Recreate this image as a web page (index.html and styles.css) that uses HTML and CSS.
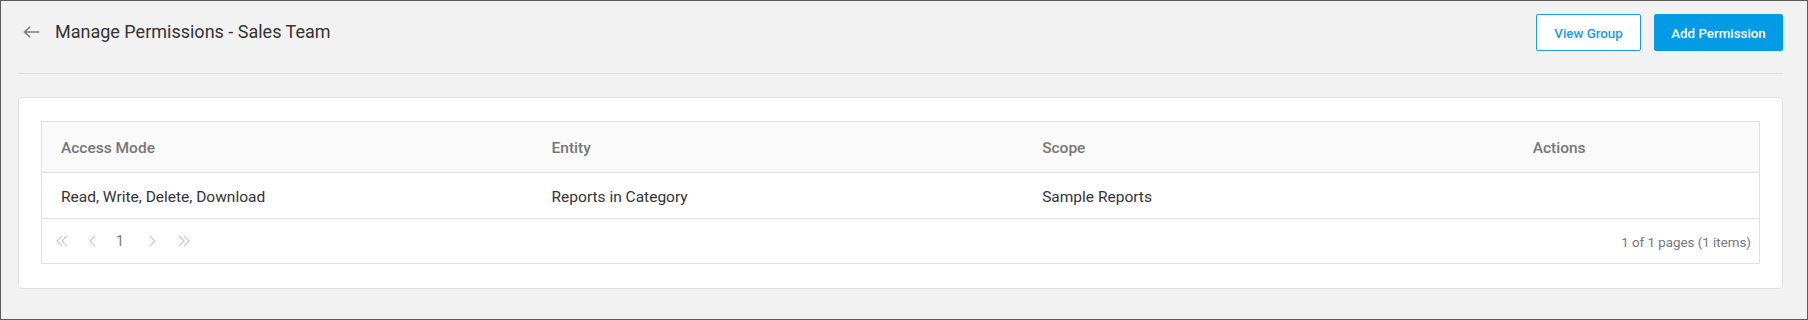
FILE: index.html
```html
<!DOCTYPE html>
<html>
<head>
<meta charset="utf-8">
<link rel="stylesheet" href="styles.css">
</head>
<body>
<div class="frame">
  <div class="header">
    <div class="title-wrap">
      <svg class="back" width="17" height="12" viewBox="0 0 17 12"><path d="M16.5 6H2M7 0.8L1.6 6L7 11.2" fill="none" stroke="#808080" stroke-width="1.6"/></svg>
      <h1 class="title">Manage Permissions - Sales Team</h1>
    </div>
    <div class="actions">
      <button class="btn btn-outline">View Group</button>
      <button class="btn btn-primary">Add Permission</button>
    </div>
  </div>
  <div class="card">
    <div class="table">
      <div class="row head">
        <div class="cell">Access Mode</div>
        <div class="cell">Entity</div>
        <div class="cell">Scope</div>
        <div class="cell">Actions</div>
      </div>
      <div class="row body">
        <div class="cell">Read, Write, Delete, Download</div>
        <div class="cell">Reports in Category</div>
        <div class="cell">Sample Reports</div>
        <div class="cell"></div>
      </div>
      <div class="footer">
        <div class="pager">
          <span class="pg"><svg width="12" height="12" viewBox="0 0 12 12"><path d="M6 0.8L1 6L6 11.2M11 0.8L6 6L11 11.2" fill="none" stroke="#c8c8c8" stroke-width="1.1"/></svg></span>
          <span class="pg"><svg width="7" height="12" viewBox="0 0 7 12"><path d="M6.2 0.8L1 6L6.2 11.2" fill="none" stroke="#c8c8c8" stroke-width="1.1"/></svg></span>
          <span class="pg num">1</span>
          <span class="pg"><svg width="7" height="12" viewBox="0 0 7 12"><path d="M0.8 0.8L6 6L0.8 11.2" fill="none" stroke="#c8c8c8" stroke-width="1.1"/></svg></span>
          <span class="pg"><svg width="12" height="12" viewBox="0 0 12 12"><path d="M1 0.8L6 6L1 11.2M6 0.8L11 6L6 11.2" fill="none" stroke="#c8c8c8" stroke-width="1.1"/></svg></span>
        </div>
        <div class="info">1 of 1 pages (1 items)</div>
      </div>
    </div>
  </div>
</div>
</body>
</html>
```
FILE: styles.css
```css
html, body {
  margin: 0;
  padding: 0;
}
body {
  font-family: Roboto, "Liberation Sans", sans-serif;
  background: #f2f2f2;
}
.frame {
  box-sizing: border-box;
  width: 1808px;
  height: 320px;
  border: 1px solid #5c5c5c;
  background: #f2f2f2;
  padding: 13px 24px 0 17px;
}
.header {
  display: flex;
  align-items: center;
  justify-content: space-between;
  height: 37px;
  padding-bottom: 22px;
  border-bottom: 1px solid #dcdcdc;
}
.title-wrap {
  display: flex;
  align-items: center;
  padding-left: 5px;
  margin-top: -2px;
}
.back {
  display: block;
  margin-right: 15px;
}
.title {
  margin: 0;
  font-size: 18px;
  font-weight: 400;
  color: #333;
}
.actions {
  display: flex;
  gap: 13px;
}
.btn {
  box-sizing: border-box;
  height: 37px;
  padding: 2px 0 0 0;
  font-family: Roboto, "Liberation Sans", sans-serif;
  font-size: 13.33px;
  font-weight: 500;
  border-radius: 2px;
  white-space: nowrap;
}
.btn-outline {
  width: 105px;
  background: #fff;
  color: #1a9be6;
  border: 1px solid #1a9be6;
}
.btn-primary {
  width: 129px;
  background: #039be5;
  color: #fff;
  border: 1px solid #039be5;
}
.card {
  margin-top: 23px;
  background: #fff;
  border: 1px solid #dfe2e5;
  border-radius: 4px;
  padding: 23px 22px 24px 22px;
}
.table {
  border: 1px solid #e0e0e0;
}
.row {
  display: grid;
  grid-template-columns: 2fr 2fr 2fr 1fr;
  border-bottom: 1px solid #e0e0e0;
}
.row.head {
  height: 50px;
  background: #fafafa;
}
.row.body {
  height: 45px;
}
.cell {
  display: flex;
  align-items: center;
  padding: 0 19px;
  font-size: 15.5px;
  color: #333;
}
.head .cell {
  font-weight: 500;
  color: #777;
  padding-top: 2px;
}
.body .cell {
  padding-top: 2px;
}
.footer {
  height: 44px;
  display: flex;
  align-items: center;
  justify-content: space-between;
  padding: 0 8px 0 4px;
}
.pager {
  display: flex;
  align-items: center;
}
.pg {
  width: 31px;
  display: flex;
  justify-content: center;
  align-items: center;
}
.pg svg {
  display: block;
}
.num {
  font-size: 14px;
  color: #777;
  width: 24px;
  margin: 0 5px 0 0;
}
.info {
  font-size: 13.33px;
  color: #777;
  padding-top: 2px;
}
```
